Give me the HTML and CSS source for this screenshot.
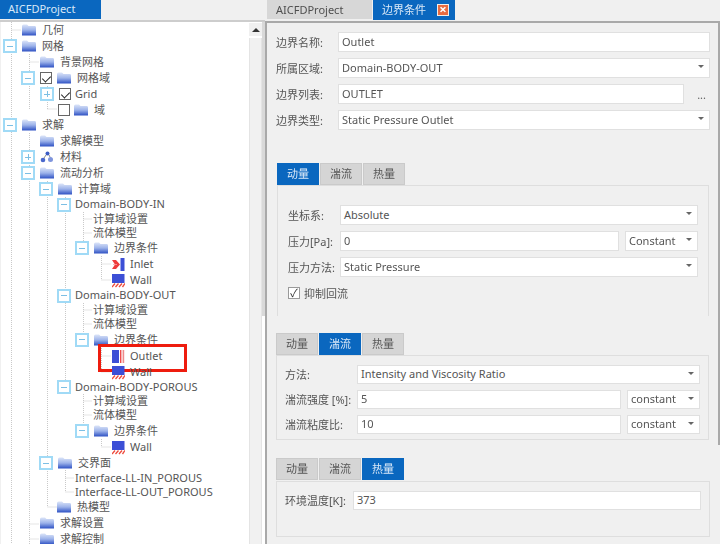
FILE: index.html
```html
<!DOCTYPE html>
<html lang="zh">
<head>
<meta charset="utf-8">
<title>AICFDProject</title>
<link rel="stylesheet" href="styles.css">
</head>
<body>
<svg class="defs" width="0" height="0">
  <defs>
    <linearGradient id="fg" x1="0" y1="0" x2="0" y2="1">
      <stop offset="0" stop-color="#dbe4f8"/>
      <stop offset="0.5" stop-color="#9db3ea"/>
      <stop offset="1" stop-color="#2f52c4"/>
    </linearGradient>
    <symbol id="folder" viewBox="0 0 14 12">
      <path d="M0 2.2Q0 .6 1.5 .6H5L6.5 2H12.6Q14 2 14 3.4V11.4H0Z" fill="url(#fg)"/>
    </symbol>
    <symbol id="wall" viewBox="0 0 13 14">
      <rect x="0" y="0" width="12.5" height="9" fill="#3c4fd6"/>
      <path d="M0 13 3 9.5M3.5 13 6.5 9.5M7 13 10 9.5M10.5 13 13 9.5" stroke="#ee4a3c" stroke-width="1.3" fill="none"/>
    </symbol>
    <symbol id="inlet" viewBox="0 0 13 14">
      <rect x="8.5" y="0" width="4" height="13" fill="#3c4fd6"/>
      <polygon points="0,2 4,2 8,6.5 4,11 0,11 3,6.5" fill="#ee3c3c"/>
      <path d="M1 6.5H5" stroke="#f7a0a0" stroke-width=".8"/>
    </symbol>
    <symbol id="outlet" viewBox="0 0 13 14">
      <rect x="0" y="0" width="7" height="13" fill="#3c4fd6"/>
      <rect x="8" y="0" width="1.4" height="13" fill="#ee4a4a"/>
      <rect x="10.6" y="0" width="1.6" height="13" fill="#ee8a8a"/>
    </symbol>
  </defs>
</svg>

<div class="app">
  <section class="left">
    <div class="lefttabs"><div class="tab-main">AICFDProject</div></div>
    <div class="treebox">
      <div class="tree">
        <svg class="guides" width="249" height="522" viewBox="0 22 249 522">
          <path d="M10.5 22V544M10.5 30H20M28.5 54V110M28.5 62H38M46.5 86V109M46.5 109H56M28.5 133V544M28.5 524H38M28.5 539H38M46.5 181V507H56M64.5 197V388M64.5 478H73M64.5 470V492H73M82.5 212V248M82.5 219H91M82.5 233H91M82.5 303V340M82.5 310H91M82.5 324H91M82.5 394V431M82.5 401H91M82.5 415H91M100.5 256V280H110M100.5 264H110M100.5 348V372H110M100.5 356H110M100.5 439V447H110" stroke="#c9c9c9" stroke-width="1" stroke-dasharray="1 1" fill="none"/>
        </svg>
        <div class="row p22"><svg class="fd"><use href="#folder"/></svg><span>几何</span></div>
        <div class="row p3"><i class="exp minus"></i><svg class="fd"><use href="#folder"/></svg><span>网格</span></div>
        <div class="row p40"><svg class="fd"><use href="#folder"/></svg><span>背景网格</span></div>
        <div class="row p21"><i class="exp minus"></i><i class="chk on"></i><svg class="fd"><use href="#folder"/></svg><span>网格域</span></div>
        <div class="row p40"><i class="exp plus"></i><i class="chk on tight"></i><span>Grid</span></div>
        <div class="row p58 h15"><i class="chk tight"></i><svg class="fd"><use href="#folder"/></svg><span>域</span></div>
        <div class="row p3"><i class="exp minus"></i><svg class="fd"><use href="#folder"/></svg><span>求解</span></div>
        <div class="row p40"><svg class="fd"><use href="#folder"/></svg><span>求解模型</span></div>
        <div class="row p21"><i class="exp plus"></i><svg class="fd mat" viewBox="0 0 14 12"><circle cx="7.5" cy="2.5" r="2" fill="#3c5cc4"/><circle cx="3" cy="9" r="2.3" fill="#4a68cc"/><circle cx="10.5" cy="8.5" r="2.5" fill="#7f95dc"/><path d="M6 4 4 7M9 4l1 2" stroke="#8a8a8a" fill="none"/></svg><span>材料</span></div>
        <div class="row p21"><i class="exp minus"></i><svg class="fd"><use href="#folder"/></svg><span>流动分析</span></div>
        <div class="row p39"><i class="exp minus"></i><svg class="fd"><use href="#folder"/></svg><span>计算域</span></div>
        <div class="row p57 h15"><i class="exp minus"></i><span>Domain-BODY-IN</span></div>
        <div class="row p93 h14"><span>计算域设置</span></div>
        <div class="row p93 h14"><span>流体模型</span></div>
        <div class="row p75"><i class="exp minus"></i><svg class="fd"><use href="#folder"/></svg><span>边界条件</span></div>
        <div class="row p112"><svg class="bc"><use href="#inlet"/></svg><span>Inlet</span></div>
        <div class="row p112"><svg class="bc"><use href="#wall"/></svg><span>Wall</span></div>
        <div class="row p57 h15"><i class="exp minus"></i><span>Domain-BODY-OUT</span></div>
        <div class="row p93 h14"><span>计算域设置</span></div>
        <div class="row p93 h14"><span>流体模型</span></div>
        <div class="row p75 h17"><i class="exp minus"></i><svg class="fd"><use href="#folder"/></svg><span>边界条件</span></div>
        <div class="row p112 marked"><svg class="bc"><use href="#outlet"/></svg><span>Outlet</span></div>
        <div class="row p112"><svg class="bc"><use href="#wall"/></svg><span>Wall</span></div>
        <div class="row p57 h14"><i class="exp minus"></i><span>Domain-BODY-POROUS</span></div>
        <div class="row p93 h14"><span>计算域设置</span></div>
        <div class="row p93 h14"><span>流体模型</span></div>
        <div class="row p75 h17"><i class="exp minus"></i><svg class="fd"><use href="#folder"/></svg><span>边界条件</span></div>
        <div class="row p112"><svg class="bc"><use href="#wall"/></svg><span>Wall</span></div>
        <div class="row p39"><i class="exp minus"></i><svg class="fd"><use href="#folder"/></svg><span>交界面</span></div>
        <div class="row p75 h14"><span>Interface-LL-IN_POROUS</span></div>
        <div class="row p75 h14"><span>Interface-LL-OUT_POROUS</span></div>
        <div class="row p57"><svg class="fd"><use href="#folder"/></svg><span>热模型</span></div>
        <div class="row p40"><svg class="fd"><use href="#folder"/></svg><span>求解设置</span></div>
        <div class="row p40"><svg class="fd"><use href="#folder"/></svg><span>求解控制</span></div>
      </div>
      <div class="vscroll">
        <div class="vbtn"><b class="up"></b></div>
        <div class="vthumb"></div>
      </div>
    </div>
  </section>

  <section class="right">
    <div class="righttabs">
      <div class="rtab">AICFDProject</div>
      <div class="rtab active">边界条件<span class="close">×</span></div>
    </div>
    <div class="panel">
      <div class="form">
        <div class="frow"><label class="lab">边界名称:</label><div class="field grow">Outlet</div></div>
        <div class="frow"><label class="lab">所属区域:</label><div class="field grow sel">Domain-BODY-OUT</div></div>
        <div class="frow"><label class="lab">边界列表:</label><div class="field grow">OUTLET</div><span class="more">...</span></div>
        <div class="frow"><label class="lab">边界类型:</label><div class="field grow sel">Static Pressure Outlet</div></div>
      </div>

      <div class="group g1">
        <div class="tabs"><div class="t on">动量</div><div class="t">湍流</div><div class="t">热量</div></div>
        <div class="pane open">
          <div class="frow"><label class="lab l52">坐标系:</label><div class="field grow sel">Absolute</div></div>
          <div class="frow"><label class="lab l52">压力[Pa]:</label><div class="field grow">0</div><div class="field unit sel">Constant</div></div>
          <div class="frow"><label class="lab l52">压力方法:</label><div class="field grow sel">Static Pressure</div></div>
          <div class="checkline"><i class="box">✓</i><span>抑制回流</span></div>
        </div>
      </div>

      <div class="group g2">
        <div class="tabs"><div class="t">动量</div><div class="t on">湍流</div><div class="t">热量</div></div>
        <div class="pane">
          <div class="frow tight"><label class="lab l72">方法:</label><div class="field grow sel">Intensity and Viscosity Ratio</div></div>
          <div class="frow tight"><label class="lab l72">湍流强度 [%]:</label><div class="field grow">5</div><div class="field unit sel">constant</div></div>
          <div class="frow tight"><label class="lab l72">湍流粘度比:</label><div class="field grow">10</div><div class="field unit sel">constant</div></div>
        </div>
      </div>

      <div class="group g3">
        <div class="tabs"><div class="t">动量</div><div class="t">湍流</div><div class="t on">热量</div></div>
        <div class="pane short">
          <div class="frow tight"><label class="lab l68">环境温度[K]:</label><div class="field grow">373</div></div>
        </div>
      </div>
    </div>
    <div class="edgebar"></div>
  </section>
</div>
</body>
</html>
```
FILE: styles.css
```css
* { box-sizing: border-box; }
html, body { margin: 0; padding: 0; }
body {
  width: 720px; height: 544px; overflow: hidden; background: #f0f0f0;
  font-family: "Noto Sans", "Noto Sans CJK SC", sans-serif;
  font-size: 11px; color: #555;
}
.defs { position: absolute; }
.app { display: flex; height: 544px; filter: blur(.3px); }

/* left */
.left { width: 265px; flex: none; display: flex; flex-direction: column; }
.lefttabs { height: 22px; border-bottom: 2px solid #cdcdcd; background: #f0f0f0; }
.tab-main { width: 101px; height: 19px; background: #0a67bf; color: #d9e8f7; line-height: 18px; padding-left: 8px; }
.treebox { flex: 1; display: flex; background: #fff; margin-left: 1px; min-height: 0; }
.tree { position: relative; width: 248px; overflow: hidden; }
.guides { position: absolute; left: 0; top: 0; }
.row { position: relative; height: 16px; display: flex; align-items: center; white-space: nowrap; margin-left: -1px; }
.h14 { height: 14px; } .h15 { height: 15px; } .h17 { height: 17px; }
.p3 { padding-left: 3px; } .p21 { padding-left: 21px; } .p22 { padding-left: 22px; }
.p39 { padding-left: 39px; } .p40 { padding-left: 40px; } .p57 { padding-left: 57px; }
.p58 { padding-left: 58px; } .p75 { padding-left: 75px; } .p93 { padding-left: 93px; } .p112 { padding-left: 112px; }
.exp { position: relative; width: 14px; height: 14px; flex: none; margin-right: 4px; background: #fff; border: 2px solid #a0daf6; }
.exp::before { content: ""; position: absolute; left: 2px; right: 2px; top: 4.5px; height: 1px; background: #7cbfe4; }
.plus::after { content: ""; position: absolute; top: 2px; bottom: 2px; left: 4.5px; width: 1px; background: #7cbfe4; }
.exp + .fd, .exp + .chk { margin-left: 1px; }
.chk { position: relative; width: 12px; height: 12px; flex: none; margin-right: 5px; background: #fff; border: 1px solid #666; }
.chk.tight { margin-right: 4px; }
.chk.on::after { content: ""; position: absolute; left: 2.5px; top: 0.5px; width: 4px; height: 7px; border: solid #222; border-width: 0 1.6px 1.6px 0; transform: rotate(45deg); }
.fd { width: 14px; height: 12px; flex: none; margin-right: 6px; position: relative; }
.bc { width: 13px; height: 14px; flex: none; margin: 1px 5px 0 0; position: relative; }
.row span { position: relative; padding-bottom: 2px; }
.marked::after { content: ""; position: absolute; left: 98px; top: -4px; width: 83px; height: 22px; border: 3px solid #ee1c0e; }
.vscroll { width: 16px; margin-left: 1px; background: #fff linear-gradient(#d9d9d9, #d9d9d9) no-repeat right top / 3px 294px; display: flex; flex-direction: column; align-items: flex-start; }
.vbtn { width: 13px; height: 13px; margin-top: 1px; background: #f0f0f0; display: flex; align-items: center; justify-content: center; }
.up { width: 0; height: 0; border: solid transparent; border-width: 0 4px 4px; border-bottom-color: #333; }
.vthumb { flex: 1; width: 13px; margin-top: 2px; background: #f1f1f1; border: solid #e4e4e4; border-width: 0 1px; }

/* right */
.right { position: relative; flex: 1; min-width: 0; display: flex; flex-direction: column; }
.righttabs { height: 21px; display: flex; padding-left: 2px; }
.rtab { width: 105px; height: 19px; background: #d7d7d7; line-height: 20px; padding-left: 9px; color: #4f4f4f; margin-right: 1px; }
.rtab.active { width: 82px; height: 20px; background: #0a67bf; color: #d9e8f7; padding-left: 9px; display: flex; align-items: flex-start; }
.close { width: 12px; height: 12px; margin: 4px 0 0 11px; background: #e96b40; color: #fff; border: 1px solid #f2ede8; font-size: 13px; font-weight: 700; line-height: 9px; text-align: center; }
.panel { flex: 1; min-height: 0; border-top: 2px solid #a9a9a9; border-left: 2px solid #a9a9a9; padding: 9px 10px 0 9px; }
.form { display: flex; flex-direction: column; gap: 6px; }
.frow { display: flex; align-items: center; height: 20px; }
.lab { width: 62px; flex: none; white-space: nowrap; }
.l52 { width: 52px; } .l72 { width: 72px; } .l68 { width: 68px; }
.field { height: 20px; line-height: 17px; padding-left: 3px; background: #fff; border: 1.5px solid #e0e0e0; white-space: nowrap; position: relative; color: #555; }
.grow { flex: 1; min-width: 0; }
.unit { width: 73px; flex: none; margin-left: 6px; }
.sel::after { content: ""; position: absolute; right: 5px; top: 6px; border: solid transparent; border-width: 3px 3px 0; border-top-color: #666; }
.more { width: 26px; flex: none; text-align: right; padding-right: 4px; font-size: 11px; color: #666; }

.tabs { display: flex; height: 22px; gap: 1px; }
.t { width: 42px; height: 22px; line-height: 20px; text-align: center; background: #d5d5d5; border: 1px solid #cacaca; color: #555; }
.t.on { background: #0a67bf; border-color: #0a67bf; color: #dbe9f8; }
.pane { border: 1.5px solid #dedede; padding: 8.5px 8px 0; display: flex; flex-direction: column; gap: 6px; }
.g1 { margin: 33px 1px 0 1px; }
.g1 .pane { height: 131px; padding: 19px 10px 0 10px; border-bottom: 0; }
.g2 { margin: 17px 1px 0 0; }
.g2 .pane { height: 85px; }
.g3 { margin: 18px 0 0 0; }
.g3 .pane { height: 56px; margin-top: 1px; }
.frow.tight { height: 19px; }
.tight .field { height: 19px; line-height: 15px; }
.checkline { display: flex; align-items: center; gap: 4px; margin-top: 2px; }
.box { width: 12px; height: 12px; background: #fff; border: 1px solid #9a9a9a; font-style: normal; font-size: 11px; line-height: 10px; text-align: center; color: #333; flex: none; }
.edgebar { position: absolute; right: 0; top: 22px; width: 2px; height: 423px; background: #a9a9a9; }
```
